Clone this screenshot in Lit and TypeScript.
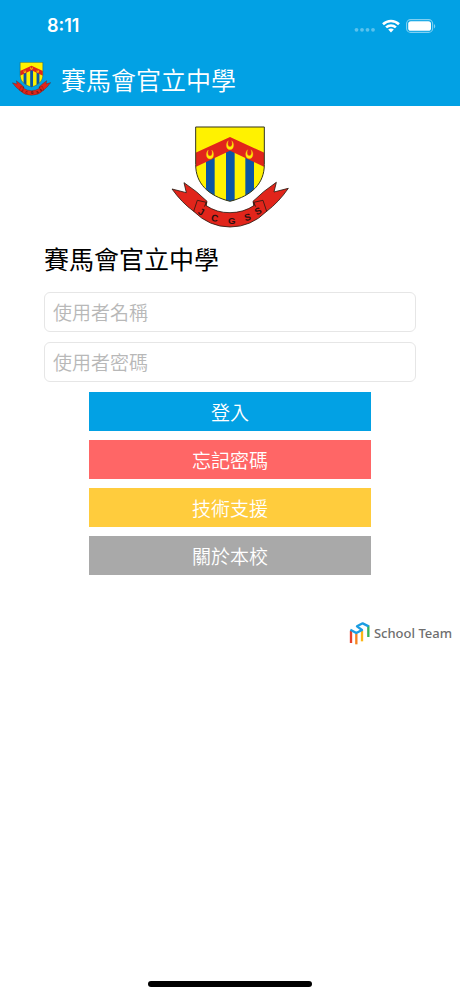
import { LitElement, html, css, svg } from "lit";
import { customElement, property } from "lit/decorators.js";

const horseshoe = (x: number, y: number) => svg`
  <path transform="translate(${x} ${y})"
    d="M-5 -14C-14 -7 -13 13 0 13C13 13 14 -7 5 -14C8 -6 7 4 0 4C-7 4 -8 -6 -5 -14Z"
    fill="#ffee00" stroke="#f0a020" stroke-width="1"/>`;

const letters: [string, number, number, number][] = [
  ["J", 104, 290, 28],
  ["C", 147, 310, 14],
  ["G", 200, 317, 0],
  ["S", 250, 307, -15],
  ["S", 284, 288, -28],
];

@customElement("school-crest")
export class SchoolCrest extends LitElement {
  static styles = css`
    :host { display: block; flex: none; }
    .art { display: block; width: 100%; height: auto; }
    .letter { font: 700 29px "Liberation Sans", sans-serif; }
  `;

  render() {
    return html`
      <svg class="art" viewBox="18 24 354 308" role="img" aria-label="校徽">
        <defs>
          <clipPath id="shield">
            <path d="M92 27H298V140C298 195 262 233 195 250C128 233 92 195 92 140Z"/>
          </clipPath>
        </defs>
        <g stroke="#2a1a12" stroke-width="2.5" stroke-linejoin="miter" fill="#e1251b">
          <path d="M21 213L64 224L57 194L94 221L126 250L118 290L86 280Q50 254 21 213Z"/>
          <path d="M370 211L327 222L334 193L296 221L264 250L272 290L305 280Q341 253 370 211Z"/>
          <path d="M97 247L124 253L122 262Q156 285 195 284Q236 284 268 262L266 253L294 247L305 280Q258 327 195 327Q133 327 86 280Z"/>
          <path d="M124 253L118 266M266 253L272 266" fill="none"/>
        </g>
        ${letters.map(
          ([ch, x, y, a]) => svg`
            <text class="letter" text-anchor="middle" fill="#2a1010"
              transform="translate(${x} ${y}) rotate(${a})">${ch}</text>`
        )}
        <g clip-path="url(#shield)">
          <rect x="90" y="24" width="210" height="230" fill="#fff200"/>
          <path d="M123 100H149V250H123ZM183 90H209V255H183ZM241 100H267V250H241Z" fill="#0a55a5"/>
          <path d="M90 105L195 57L300 105V148L195 98L90 148Z" fill="#e1251b"/>
        </g>
        ${horseshoe(135, 110)} ${horseshoe(195, 82)} ${horseshoe(253, 109)}
        <path d="M92 27H298V140C298 195 262 233 195 250C128 233 92 195 92 140Z"
          fill="none" stroke="#33331a" stroke-width="3"/>
      </svg>`;
  }
}

@customElement("status-bar")
export class StatusBar extends LitElement {
  @property() time = "";

  static styles = css`
    :host {
      display: flex;
      align-items: center;
      justify-content: space-between;
      height: 52px;
      padding: 0 24px 0 47px;
      color: #fff;
      font: 600 18px/24px Inter, "Liberation Sans", sans-serif;
    }
    .icons { display: flex; align-items: center; gap: 6px; }
    .icon { display: block; }
  `;

  render() {
    return html`
      <span>${this.time}</span>
      <div class="icons">
        <svg class="icon" width="22" height="14" viewBox="0 0 22 14" fill="#fff" fill-opacity=".35">
          <circle cx="2.5" cy="10.8" r="1.9"/><circle cx="8" cy="10.8" r="1.9"/>
          <circle cx="13.5" cy="10.8" r="1.9"/><circle cx="19" cy="10.8" r="1.9"/>
        </svg>
        <svg class="icon" width="18" height="14" viewBox="0 0 18 14" fill="none" stroke="#fff" stroke-width="2.6">
          <path d="M1 5.2C5.6 .9 12.4 .9 17 5.2"/>
          <path d="M4.1 8.4C6.9 5.8 11.1 5.8 13.9 8.4"/>
          <path d="M9 13.4L6.2 10.6C7.7 9.2 10.3 9.2 11.8 10.6Z" fill="#fff" stroke="none"/>
        </svg>
        <svg class="icon" width="30" height="14" viewBox="0 0 30 14">
          <rect x=".6" y=".6" width="26" height="12.8" rx="4" fill="none" stroke="#fff" stroke-opacity=".5" stroke-width="1.1"/>
          <rect x="2.2" y="2.2" width="22.8" height="9.6" rx="2.6" fill="#fff"/>
          <path d="M28 5V9.4C29.7 8.6 29.7 5.8 28 5Z" fill="#fff" fill-opacity=".5"/>
        </svg>
      </div>`;
  }
}

@customElement("school-team-logo")
export class SchoolTeamLogo extends LitElement {
  static styles = css`
    :host {
      display: flex;
      align-items: center;
      gap: 4px;
      color: #6e6e6e;
      font: 500 13px/24px "Noto Sans", "Open Sans", sans-serif;
    }
    .mark { display: block; }
  `;

  render() {
    return html`
      <svg class="mark" width="21" height="24" viewBox="0 0 63 72" fill="none" stroke-width="7" aria-hidden="true">
        <path d="M6 30V66" stroke="#e8412c"/>
        <path d="M22 38V70" stroke="#f58220"/>
        <path d="M39 29V61" stroke="#fbb615"/>
        <path d="M58 13V48" stroke="#35b35a"/>
        <path d="M4 26L22 36L39 27L24 16L41 7L59 16" stroke="#1b9de2" stroke-linejoin="round"/>
      </svg>
      <span>School Team</span>`;
  }
}

@customElement("app-root")
export class AppRoot extends LitElement {
  private school = "賽馬會官立中學";

  static styles = css`
    :host {
      display: flex;
      flex-direction: column;
      min-height: 100vh;
      box-sizing: border-box;
      background: #fff;
      color: #000;
      font-family: "Noto Sans CJK TC", sans-serif;
      font-weight: 350;
    }
    .header { background: #02a1e4; color: #fff; }
    .bar {
      display: flex;
      align-items: center;
      gap: 10px;
      height: 54px;
      padding: 0 12px;
      box-sizing: border-box;
    }
    .small { width: 39px; }
    .title, .name {
      margin: 0;
      font-size: 25px;
      line-height: 36px;
      font-weight: 350;
    }
    .name { font-weight: 400; align-self: flex-start; }
    .main {
      display: flex;
      flex-direction: column;
      align-items: center;
      padding: 20px 44px;
    }
    .large { width: 118px; margin-bottom: 11px; }
    .form {
      display: flex;
      flex-direction: column;
      align-items: center;
      width: 100%;
      padding-top: 16px;
    }
    .field {
      width: 100%;
      height: 40px;
      margin: 0 0 10px;
      padding: 0 8px;
      box-sizing: border-box;
      border: 1px solid #e6e6e6;
      border-radius: 6px;
      background: #fff;
      color: #000;
      font: inherit;
      font-size: 19px;
    }
    .field::placeholder { color: #b8b8b8; opacity: 1; }
    .actions {
      display: flex;
      flex-direction: column;
      gap: 9px;
      width: 76%;
    }
    .button {
      height: 39px;
      padding: 0;
      border: 0;
      color: #fff;
      font: inherit;
      font-size: 19px;
      line-height: 39px;
    }
    .login { background: #02a1e4; }
    .forgot { background: #ff6666; }
    .support { background: #ffcc3d; }
    .about { background: #a9a9a9; }
    .brand { align-self: flex-end; margin: 26px 8px 0 0; }
    .home {
      width: 164px;
      height: 6px;
      margin: auto auto 9px;
      border-radius: 3px;
      background: #000;
    }
  `;

  render() {
    return html`
      <header class="header">
        <status-bar time="8:11"></status-bar>
        <div class="bar">
          <school-crest class="small"></school-crest>
          <h1 class="title">${this.school}</h1>
        </div>
      </header>
      <main class="main">
        <school-crest class="large"></school-crest>
        <h2 class="name">${this.school}</h2>
        <form class="form">
          <input class="field" type="text" placeholder="使用者名稱" aria-label="使用者名稱">
          <input class="field" type="password" placeholder="使用者密碼" aria-label="使用者密碼">
          <div class="actions">
            <button class="button login" type="button">登入</button>
            <button class="button forgot" type="button">忘記密碼</button>
            <button class="button support" type="button">技術支援</button>
            <button class="button about" type="button">關於本校</button>
          </div>
        </form>
      </main>
      <school-team-logo class="brand"></school-team-logo>
      <div class="home"></div>`;
  }
}
